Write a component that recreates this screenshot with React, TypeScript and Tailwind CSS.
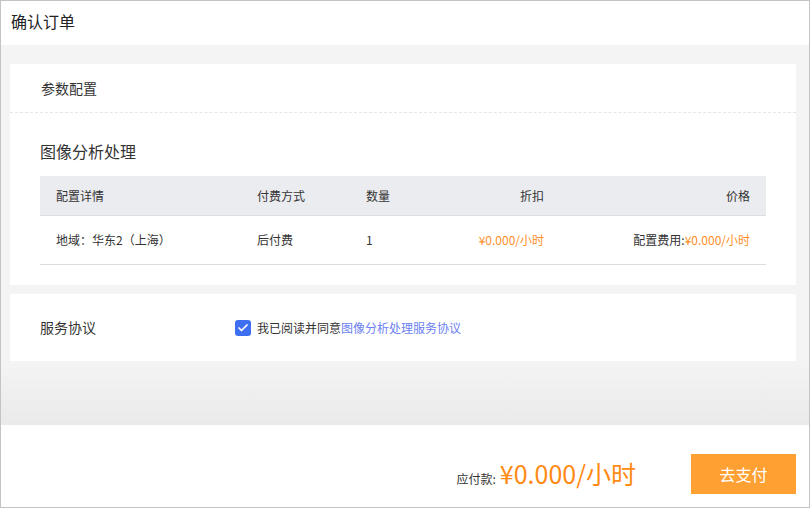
import { Check } from 'lucide-react'

const cols = 'grid grid-cols-[201px_109px_100px_110px_1fr]'

export default function App() {
  return (
    <div
      className="w-[810px] h-[508px] border border-[#c4c4c4] flex flex-col bg-white text-[#333]"
      style={{ fontFamily: '"Noto Sans CJK SC", "Noto Sans", sans-serif' }}
    >
      <div className="h-[44px] shrink-0 flex items-center pl-[10px] pb-[4px] text-[16px] text-[#222]">
        确认订单
      </div>

      <div className="flex-1 bg-[#f4f4f4] flex flex-col">
        <div className="pl-[9px] pr-[13px] pt-[19px] flex flex-col gap-[9px]">
          <div className="bg-white pb-[20px]">
            <div className="h-[49px] flex items-center pl-[31px] text-[14px] border-b border-dashed border-[#e6e6e6]">
              参数配置
            </div>
            <div className="px-[30px]">
              <div className="pt-[26px] pb-[13px] text-[16px] leading-[24px] text-[#333]">图像分析处理</div>
              <div className={`${cols} h-[40px] items-center bg-[#ebecf0] border-b border-[#dcdee3] text-[12px]`}>
                <div className="pl-4">配置详情</div>
                <div className="pl-4">付费方式</div>
                <div className="pl-4">数量</div>
                <div className="text-right pr-4">折扣</div>
                <div className="text-right pr-4">价格</div>
              </div>
              <div className={`${cols} h-[49px] items-center border-b border-[#dcdcdc] text-[12px]`}>
                <div className="pl-4">地域：华东2（上海）</div>
                <div className="pl-4">后付费</div>
                <div className="pl-4">1</div>
                <div className="text-right pr-4 text-[#ff8f2a]">¥0.000/小时</div>
                <div className="text-right pr-4">
                  配置费用:<span className="text-[#ff8f2a]">¥0.000/小时</span>
                </div>
              </div>
            </div>
          </div>

          <div className="bg-white h-[67px] flex items-center pl-[30px]">
            <div className="w-[195px] text-[14px]">服务协议</div>
            <div className="flex items-center gap-[6px] text-[12px]">
              <span className="w-4 h-4 rounded-[3px] bg-[#3d6ff0] flex items-center justify-center">
                <Check className="w-3 h-3 text-white" strokeWidth={3.5} />
              </span>
              <span>
                我已阅读并同意<span className="text-[#6b7ff0]">图像分析处理服务协议</span>
              </span>
            </div>
          </div>
        </div>
        <div className="flex-1 bg-gradient-to-b from-[#f4f4f4] to-[#eaeaea]" />
      </div>

      <div className="h-[82px] shrink-0 flex justify-end items-start pt-[29px] pr-[13px]">
        <div className="flex items-center gap-[55px]">
          <div className="flex items-baseline gap-[4px]">
            <span className="text-[12px]">应付款:</span>
            <span className="text-[25px] leading-none text-[#ff8a14]">¥0.000/小时</span>
          </div>
          <button className="w-[105px] h-[40px] bg-[#ffa033] text-white text-[16px]">去支付</button>
        </div>
      </div>
    </div>
  )
}
